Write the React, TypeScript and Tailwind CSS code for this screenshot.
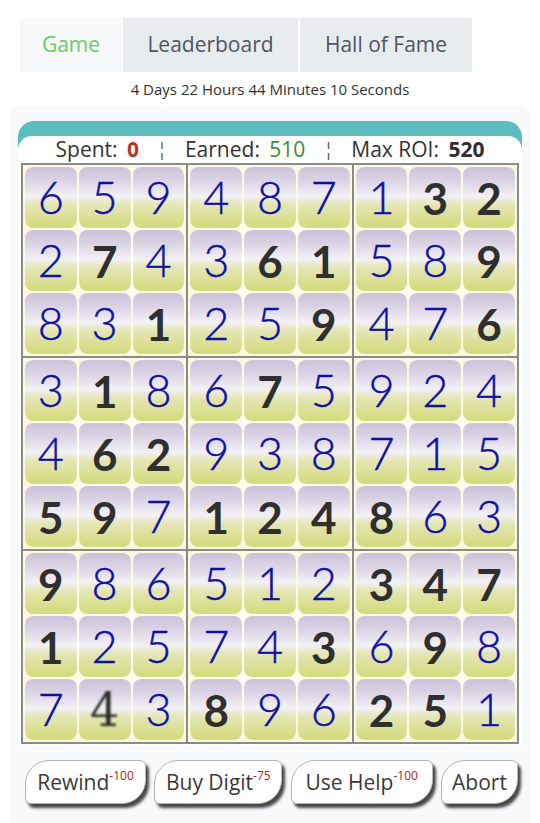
import React from "react";

// digits of the board, row by row
const rows = [
	"659487132",
	"274361589",
	"831259476",
	"318675924",
	"462938715",
	"597124863",
	"986512347",
	"125743698",
	"743896251",
];

// 1 marks a given (bold dark) digit
const givens = [
	"000000011",
	"010011001",
	"001001001",
	"010010000",
	"011000000",
	"110111100",
	"100000111",
	"100001010",
	"000100110",
];

const uiFont = { fontFamily: "'Open Sans', 'Noto Sans', sans-serif" };

function Cell({ digit, given, special }: { digit: string; given: boolean; special?: boolean }) {
	return (
		<div className="h-[61px] rounded-[8px] flex items-center justify-center bg-[linear-gradient(to_bottom,#cbc1d9_0%,#ddd6e6_25%,#f3f1f6_48%,#e4e6b4_62%,#d3da78_100%)] shadow-[inset_0_0_1px_rgba(255,255,255,0.8)] [font-family:Lato,sans-serif]">
			{special ? (
				<span className="text-[46px] leading-none text-[#2a2a2a] blur-[0.8px] [font-family:'DejaVu_Serif',serif]">
					{digit}
				</span>
			) : given ? (
				<span className="text-[44px] leading-none font-bold text-[#2f2f2f]">{digit}</span>
			) : (
				<span className="text-[45px] leading-none font-light text-[#1010a8] [-webkit-text-stroke:0.4px_#1010a8]">
					{digit}
				</span>
			)}
		</div>
	);
}

function Box({ br, bc }: { br: number; bc: number }) {
	const cells = [];
	for (let r = 0; r < 3; r++) {
		for (let c = 0; c < 3; c++) {
			const row = br * 3 + r;
			const col = bc * 3 + c;
			cells.push(
				<Cell
					key={`${r}-${c}`}
					digit={rows[row][col]}
					given={givens[row][col] === "1"}
					special={row === 8 && col === 1}
				/>
			);
		}
	}
	return (
		<div className="grid grid-cols-3 gap-[2px] p-[2px] bg-[radial-gradient(circle,#ffffff_0%,#fbf9e0_60%)]">
			{cells}
		</div>
	);
}

function ActionButton({ label, cost, width }: { label: string; cost?: string; width: string }) {
	return (
		<button
			className={`${width} h-[44px] bg-white border border-[#b5b5b5] rounded-[24px_6px_24px_6px] shadow-[3px_4px_3px_rgba(40,40,40,0.85)] text-[21px] leading-[42px] text-[#3a3a3a] text-center whitespace-nowrap`}
		>
			{label}
			{cost && <sup className="text-[12px] text-[#b22222] top-[-0.8em]">{cost}</sup>}
		</button>
	);
}

export default function App() {
	return (
		<div className="w-[540px] h-[823px] overflow-hidden bg-white" style={uiFont}>
			{/* tabs */}
			<div className="flex pt-[18px] pl-[20px]">
				<div className="w-[102px] h-[54px] bg-[#f7f8f9] flex items-center justify-center text-[21px] text-[#66cc66]">
					Game
				</div>
				<div className="w-[175px] h-[54px] ml-[1px] bg-[#e9ecef] flex items-center justify-center text-[21px] text-[#4f5563]">
					Leaderboard
				</div>
				<div className="w-[172px] h-[54px] ml-[2px] bg-[#e9ecef] flex items-center justify-center text-[21px] text-[#4f5563]">
					Hall of Fame
				</div>
			</div>
			<div className="text-center text-[15px] text-[#333] mt-[7px] h-[20px] leading-[20px]">
				4 Days 22 Hours 44 Minutes 10 Seconds
			</div>

			{/* game card */}
			<div className="mx-[10px] mt-[7px] rounded-[12px] bg-[#f8f9fa] pt-[15px] px-[8px] pb-[40px]">
				<div className="rounded-t-[16px] bg-[#5cbcc0] pt-[15px]">
					<div className="rounded-t-[14px] bg-white px-[3px] pb-[1px]">
						<div className="h-[27px] flex items-center justify-center text-[21px] text-[#333] gap-[18px]">
							<span>
								Spent: <b className="text-[#c0302a] ml-[4px]">0</b>
							</span>
							<span className="text-[#555] text-[18px]">¦</span>
							<span>
								Earned: <span className="text-[#3c8a3c] ml-[4px]">510</span>
							</span>
							<span className="text-[#555] text-[18px]">¦</span>
							<span>
								Max ROI: <b className="text-[#2f2f2f] ml-[4px]">520</b>
							</span>
						</div>
						<div className="grid grid-cols-3 gap-[2px] bg-[#8a8a8a] p-[2px]">
							{[0, 1, 2].map((br) =>
								[0, 1, 2].map((bc) => <Box key={`${br}-${bc}`} br={br} bc={bc} />)
							)}
						</div>
					</div>
				</div>

				{/* action buttons */}
				<div className="flex justify-between items-center mt-[15px] pl-[7px] pr-[4px]">
					<ActionButton label="Rewind" cost="-100" width="w-[121px]" />
					<ActionButton label="Buy Digit" cost="-75" width="w-[128px]" />
					<ActionButton label="Use Help" cost="-100" width="w-[142px]" />
					<ActionButton label="Abort" width="w-[77px]" />
				</div>
			</div>
		</div>
	);
}
